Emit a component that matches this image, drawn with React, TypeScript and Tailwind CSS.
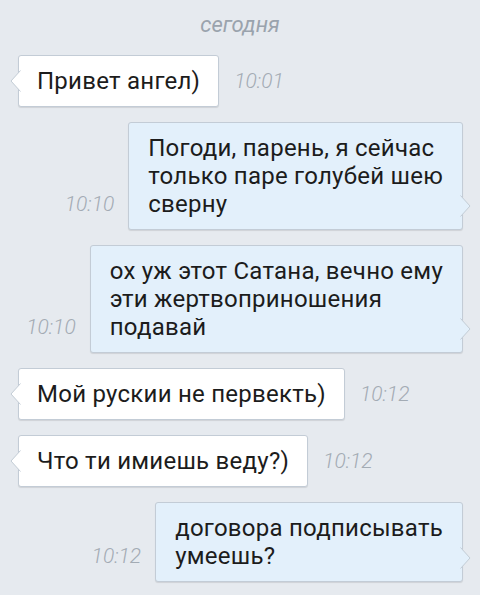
import React from "react"

type Msg = {
  out: boolean
  lines: string[]
  time: string
}

const MESSAGES: Msg[] = [
  { out: false, lines: ["Привет ангел)"], time: "10:01" },
  {
    out: true,
    lines: ["Погоди, парень, я сейчас", "только паре голубей шею", "сверну"],
    time: "10:10",
  },
  {
    out: true,
    lines: ["ох уж этот Сатана, вечно ему", "эти жертвоприношения", "подавай"],
    time: "10:10",
  },
  { out: false, lines: ["Мой рускии не первекть)"], time: "10:12" },
  { out: false, lines: ["Что ти имиешь веду?)"], time: "10:12" },
  { out: true, lines: ["договора подписывать", "умеешь?"], time: "10:12" },
]

function Tail({ out }: { out: boolean }) {
  const fill = out ? "#e3f0fb" : "#ffffff"
  if (out) {
    return (
      <svg
        width="12"
        height="22"
        viewBox="0 0 12 22"
        className="absolute right-[-10px] bottom-[12px]"
        aria-hidden
      >
        <polygon points="0,0 10,11 0,22" fill={fill} />
        <polyline points="0.5,0.5 10,11 0.5,21.5" fill="none" stroke="#c3ccd6" strokeWidth="1" />
      </svg>
    )
  }
  return (
    <svg
      width="12"
      height="22"
      viewBox="0 0 12 22"
      className="absolute left-[-10px] top-[14px]"
      aria-hidden
    >
      <polygon points="12,0 2,11 12,22" fill={fill} />
      <polyline points="11.5,0.5 2,11 11.5,21.5" fill="none" stroke="#c3ccd6" strokeWidth="1" />
    </svg>
  )
}

function Time({ t }: { t: string }) {
  return (
    <span className="pb-[12px] text-[21px] font-light italic leading-[28px] text-[#a3abb4]">
      {t}
    </span>
  )
}

function Bubble({ m }: { m: Msg }) {
  return (
    <div
      className={
        m.out
          ? "relative rounded-[3px] border border-[#c3ccd6] bg-[#e3f0fb] px-[19px] py-[11px] shadow-[0_1px_1px_rgba(0,0,0,0.1)]"
          : "relative rounded-[3px] border border-[#c3ccd6] bg-white px-[18px] py-[11px] shadow-[0_1px_1px_rgba(0,0,0,0.1)]"
      }
    >
      <Tail out={m.out} />
      <div className="whitespace-nowrap text-[24px] leading-[28px] tracking-[0.25px] text-[#1c1c1c]">
        {m.lines.map((l, i) => (
          <div key={i}>{l}</div>
        ))}
      </div>
    </div>
  )
}

export default function App() {
  return (
    <div
      className="h-[595px] w-[480px] overflow-hidden bg-[#e6eaef]"
      style={{ fontFamily: "Roboto, 'Noto Sans', sans-serif" }}
    >
      <div className="pt-[10px] text-center text-[22px] italic leading-[30px] text-[#9aa3ad]">
        сегодня
      </div>
      <div className="mt-[15px] flex flex-col gap-[15px]">
        {MESSAGES.map((m, i) =>
          m.out ? (
            <div key={i} className="flex items-end justify-end gap-[14px] pr-[17px]">
              <Time t={m.time} />
              <Bubble m={m} />
            </div>
          ) : (
            <div key={i} className="flex items-end gap-[15px] pl-[18px]">
              <Bubble m={m} />
              <Time t={m.time} />
            </div>
          )
        )}
      </div>
    </div>
  )
}
